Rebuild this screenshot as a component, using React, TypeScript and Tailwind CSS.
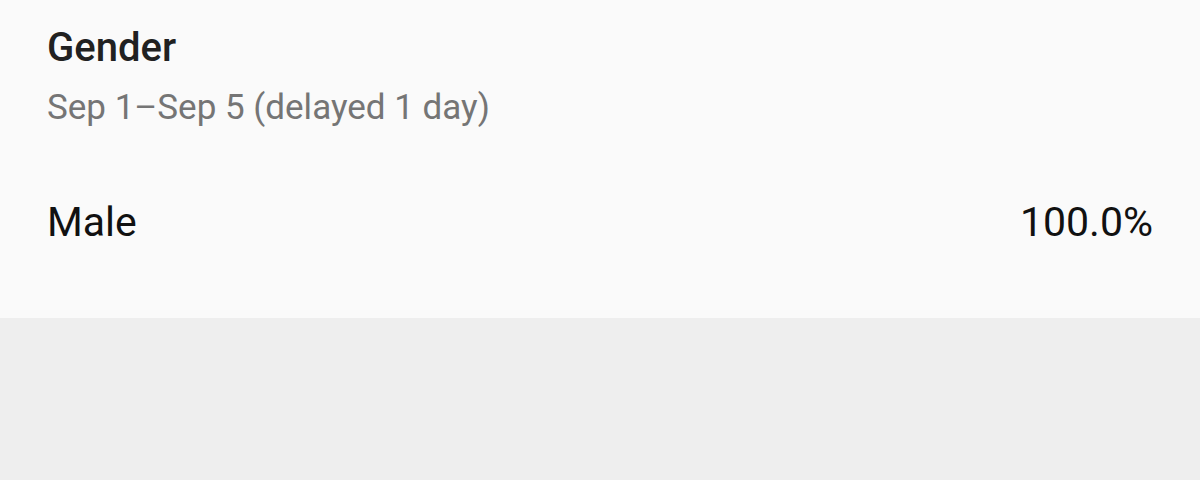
export default function App() {
  return (
    <div className="w-[1200px] h-[480px] bg-[#eeeeee] font-['Roboto',sans-serif]">
      {/* Card */}
      <div className="h-[318px] bg-[#fafafa] px-[47px] pt-[25px]">
        <div className="text-[40px] leading-[46px] font-medium text-[#212121]">Gender</div>
        <div className="mt-[17px] text-[35px] leading-[40px] text-[#757575]">Sep 1–Sep 5 (delayed 1 day)</div>
        <div className="mt-[71px] flex items-center justify-between text-[41px] leading-[46px] text-[#111111]">
          <span>Male</span>
          <span>100.0%</span>
        </div>
      </div>
    </div>
  );
}
